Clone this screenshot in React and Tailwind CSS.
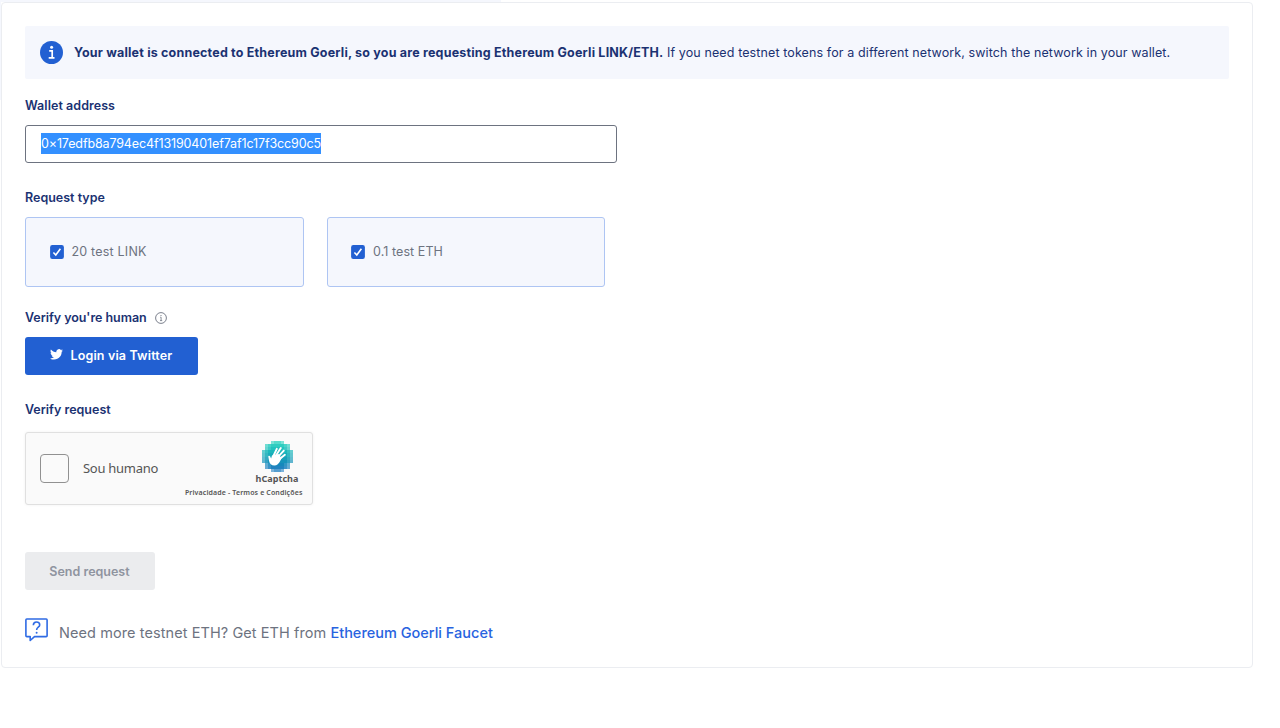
import React from "react";

function InfoBadge() {
  return (
    <svg className="h-[23px] w-[23px] shrink-0" viewBox="0 0 23 23">
      <circle cx="11.5" cy="11.5" r="11.5" fill="#2260d2" />
      <circle cx="11.6" cy="6.3" r="1.5" fill="#fff" />
      <path d="M9.2 9.9h3v6.6M8.7 16.8h5.8" fill="none" stroke="#fff" strokeWidth="1.7" />
    </svg>
  );
}

function InfoOutline() {
  return (
    <svg className="ml-2 h-3 w-3 shrink-0" viewBox="0 0 12 12" fill="none" stroke="#6d7380">
      <circle cx="6" cy="6" r="5.4" strokeWidth="0.9" />
      <path d="M5.2 5.2h.9v3.3M5 8.6h2.2" strokeWidth="0.8" />
      <circle cx="6" cy="3.5" r="0.6" fill="#6d7380" stroke="none" />
    </svg>
  );
}

function TwitterBird() {
  return (
    <svg className="mb-[3px] h-[11px] w-[13px] shrink-0" viewBox="0 2 24 20.5" fill="#fff" preserveAspectRatio="none">
      <path d="M23.953 4.57a10 10 0 01-2.825.775 4.958 4.958 0 002.163-2.723c-.951.555-2.005.959-3.127 1.184a4.92 4.92 0 00-8.384 4.482C7.69 8.095 4.067 6.13 1.64 3.162a4.822 4.822 0 00-.666 2.475c0 1.71.87 3.213 2.188 4.096a4.904 4.904 0 01-2.228-.616v.06a4.923 4.923 0 003.946 4.827 4.996 4.996 0 01-2.212.085 4.936 4.936 0 004.604 3.417 9.867 9.867 0 01-6.102 2.105c-.39 0-.779-.023-1.17-.067a13.995 13.995 0 007.557 2.209c9.053 0 13.998-7.496 13.998-13.985 0-.21 0-.42-.015-.63A9.935 9.935 0 0024 4.59z" />
    </svg>
  );
}

function CheckMark() {
  return (
    <svg className="h-[14px] w-[14px] shrink-0" viewBox="0 0 14 14">
      <rect x="0.1" y="0.1" width="13.8" height="13.8" rx="2.2" fill="#2260d2" />
      <path d="M3.4 7.5l2.4 2.5 4.6-6.2" fill="none" stroke="#fff" strokeWidth="1.6" />
    </svg>
  );
}

const pixelRows = [
  { y: 0, x: 3, n: 4 }, { y: 1, x: 1, n: 8 }, { y: 2, x: 1, n: 8 },
  { y: 3, x: 0, n: 10 }, { y: 4, x: 0, n: 10 }, { y: 5, x: 0, n: 10 }, { y: 6, x: 0, n: 10 },
  { y: 7, x: 1, n: 8 }, { y: 8, x: 1, n: 8 }, { y: 9, x: 3, n: 4 },
];
const rowColors = ["#3fd6c4", "#2fcdc0", "#22c2bd", "#1bb8bb", "#18adba", "#189fb9", "#1693ba", "#1688bc", "#2183bf", "#3c8fca"];

function CaptchaLogo() {
  return (
    <svg className="h-[31px] w-[31px]" viewBox="0 0 31 31">
      <g shapeRendering="crispEdges">
        {pixelRows.map((r) =>
          Array.from({ length: r.n }, (_, i) => (
            <rect
              key={`${r.y}-${i}`}
              x={(r.x + i) * 3.1}
              y={r.y * 3.1}
              width="3.1"
              height="3.1"
              fill={rowColors[r.y]}
              opacity={i === 0 || i === r.n - 1 ? 0.68 : i === 1 || i === r.n - 2 ? 0.88 : 1}
            />
          ))
        )}
      </g>
      <g fill="none" stroke="#fff" strokeLinecap="round" strokeWidth="1.9">
        <path d="M11.200 15.5L14.800 7.800" />
        <path d="M13.600 15L18.800 7" />
        <path d="M15.600 16.400L21.800 9.600" />
        <path d="M17 18.600L22.900 13.800" />
      </g>
      <path d="M10 14.500L16.600 13l2.900 4.200-1.300 2.800c-1.400 2.800-3.300 4.600-5.900 4.500-2.800-.1-4.800-1.900-5.300-4.800l-.7-4c-.2-1.100 1.500-1.400 1.900-.3l.9 2.200z" fill="#fff" />
    </svg>
  );
}

function HelpBubble() {
  return (
    <svg className="h-6 w-[23px] shrink-0" viewBox="0 0 23 24" fill="none" stroke="#2f6be4" strokeWidth="1.6">
      <path d="M1.800 1h19.400a.9.9 0 01.9.9v15.800a.9.9 0 01-.9.9H9.500l-4.300 3.900v-3.900H1.800a.9.9 0 01-.9-.9V1.900A.9.9 0 011.800 1z" strokeLinejoin="round" />
      <path d="M8.300 7.300c.1-2.200 1.500-3.300 3.200-3.300 1.800 0 3.200 1.200 3.200 2.900 0 2.300-3.100 2.400-3.100 5.100" />
      <circle cx="11.600" cy="14.800" r="1" fill="#2f6be4" stroke="none" />
    </svg>
  );
}

function Label({ children, className = "" }) {
  return <div className={`flex h-5 items-center text-[12.5px] font-semibold text-[#1b3272] ${className}`}>{children}</div>;
}

function TokenOption({ children }) {
  return (
    <label className="flex h-[70px] w-[278.5px] items-center gap-[8px] rounded-[3px] border border-[#aec5f3] bg-[#f5f7fd] pl-[23.5px] text-[12.5px] text-[#6d7380]">
      <CheckMark />
      {children}
    </label>
  );
}

export default function App() {
  return (
    <div className="h-[728px] w-full overflow-hidden bg-white font-['Inter',sans-serif]">
      <div className="h-[2px] w-[501px] bg-[#f5f7fd]" />
      <div className="flex">
        <div className="h-[98px] w-px bg-[#f5f7fd]" />
        <main className="h-[666px] w-[1252px] rounded-[4px] border border-[#ebedf1] px-[23px] pt-[23px]">
          <section className="flex h-[53px] items-center rounded-[2px] bg-[#f5f7fd] pl-[15px] text-[12.5px] text-[#1b3272]">
            <InfoBadge />
            <p className="ml-[11px] whitespace-nowrap pt-[2px]">
              <span className="font-bold tracking-[0.19px]">Your wallet is connected to Ethereum Goerli, so you are requesting Ethereum Goerli LINK/ETH.</span>{" "}
              <span className="tracking-[0.11px]">If you need testnet tokens for a different network, switch the network in your wallet.</span>
            </p>
          </section>

          <Label className="mt-[17px] tracking-[0.05px]">Wallet address</Label>
          <div className="mt-[9px] flex h-[38px] w-[591.5px] items-center rounded-[3px] border border-[#6d7380] pl-[15px] text-[12.5px] text-white">
            <span className="mb-px h-[21px] bg-[#3390ff] leading-[21px] tracking-[-0.124px]">0×17edfb8a794ec4f13190401ef7af1c17f3cc90c5</span>
          </div>

          <Label className="mt-[25px]">Request type</Label>
          <div className="mt-[9px] flex gap-[23px]">
            <TokenOption><span className="pt-px tracking-[0.2px]">20 test LINK</span></TokenOption>
            <TokenOption><span className="pt-px tracking-[0.08px]">0.1 test ETH</span></TokenOption>
          </div>

          <Label className="mt-[21px] tracking-[-0.05px]">Verify you're human<InfoOutline /></Label>
          <button className="mt-[9px] flex h-[38px] w-[173px] items-center rounded-[3px] bg-[#2260d2] pl-[25px] text-[12.5px] font-semibold text-white">
            <TwitterBird />
            <span className="ml-[7.5px] tracking-[0.15px]">Login via Twitter</span>
          </button>

          <Label className="mt-[25px]">Verify request</Label>
          <div className="mt-[12px] flex h-[73px] w-[288px] items-center rounded-[3px] border border-[#e0e0e0] bg-[#fafafa] pl-[14px] pr-[9.5px] font-['Noto_Sans',sans-serif] text-[#555] shadow-[0_0_3px_rgba(0,0,0,0.06)]">
            <div className="h-[29px] w-[29px] shrink-0 rounded-[4px] border border-[#919191] bg-[#fafafa]" />
            <span className="ml-[14px] whitespace-nowrap text-[13px] tracking-[-0.28px]">Sou humano</span>
            <div className="ml-auto flex h-full flex-col items-end pt-[8px]">
              <div className="mr-[4px] flex w-[43px] flex-col items-center">
                <CaptchaLogo />
                <span className="mt-px text-[9px] font-bold leading-[12px] tracking-[0.05px]">hCaptcha</span>
              </div>
              <span className="mt-[3px] whitespace-nowrap text-[7px] font-semibold leading-[9px] tracking-[0.13px]">Privacidade - Termos e Condições</span>
            </div>
          </div>

          <button className="mt-[47px] block h-[38px] w-[130px] rounded-[3px] bg-[#ebecee] pr-px pt-[2px] text-[12.5px] font-semibold text-[#8f949f]">Send request</button>

          <div className="mt-[28px] flex text-[14.5px] leading-[28px] text-[#6d7380]">
            <HelpBubble />
            <p className="ml-[11px] whitespace-nowrap pt-px">
              <span className="tracking-[0.08px]">Need more testnet ETH? Get ETH from</span>{" "}
              <a className="font-medium text-[#2863e0]">Ethereum Goerli Faucet</a>
            </p>
          </div>
        </main>
      </div>
    </div>
  );
}
